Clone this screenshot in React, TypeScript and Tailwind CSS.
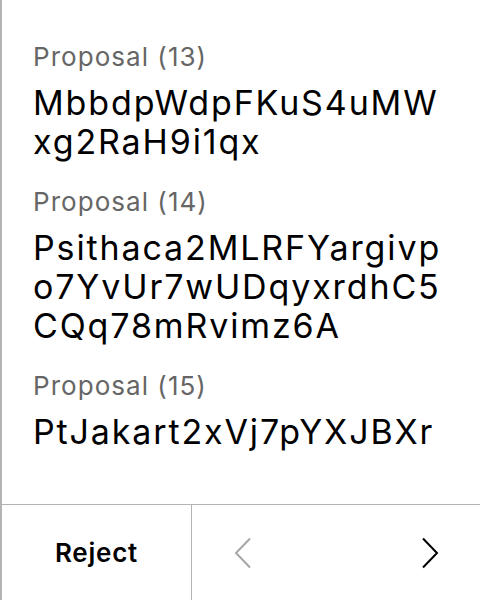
import React from "react";

const items = [
  { label: "Proposal (13)", value: "MbbdpWdpFKuS4uMWxg2RaH9i1qx" },
  { label: "Proposal (14)", value: "Psithaca2MLRFYargivpo7YvUr7wUDqyxrdhC5CQq78mRvimz6A" },
  { label: "Proposal (15)", value: "PtJakart2xVj7pYXJBXr" },
];

export default function App() {
  return (
    <div
      className="h-[600px] w-[480px] flex flex-col bg-white border-l-2 border-[#b3b3b3]"
      style={{ fontFamily: "Inter, 'Noto Sans', sans-serif" }}
    >
      <div className="flex-1 flex flex-col gap-[25px] pt-[41px] pl-[31px] pr-[28px]">
        {items.map((it) => (
          <div key={it.label} className="flex flex-col">
            <div className="text-[26px] leading-[32px] tracking-[0.04em] text-[#666666] mb-[10px]">{it.label}</div>
            <div className="text-[34px] leading-[39px] tracking-[0.055em] text-black break-all">{it.value}</div>
          </div>
        ))}
      </div>
      <div className="h-[96px] flex border-t border-[#b3b3b3]">
        <button className="w-[190px] flex items-center justify-center border-r border-[#b3b3b3] text-[26px] tracking-[0.03em] font-semibold text-black">
          Reject
        </button>
        <div className="flex-1 flex items-center justify-between pl-[42px] pr-[41px]">
          <svg width="18" height="32" viewBox="0 0 18 32" fill="none">
            <path d="M16 1.5 L2 16 L16 30.5" stroke="#a6a6a6" strokeWidth="2" />
          </svg>
          <svg width="18" height="32" viewBox="0 0 18 32" fill="none">
            <path d="M2 1.5 L16 16 L2 30.5" stroke="#000000" strokeWidth="2" />
          </svg>
        </div>
      </div>
    </div>
  );
}
